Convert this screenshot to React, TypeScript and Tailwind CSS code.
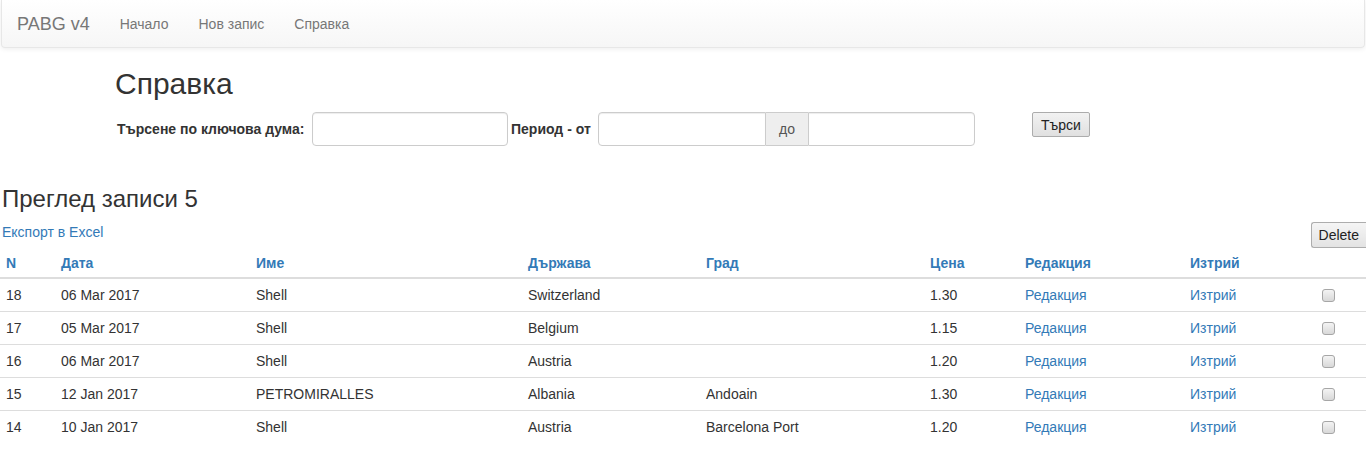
const rows = [
  { n: 18, date: "06 Mar 2017", name: "Shell", country: "Switzerland", city: "", price: "1.30" },
  { n: 17, date: "05 Mar 2017", name: "Shell", country: "Belgium", city: "", price: "1.15" },
  { n: 16, date: "06 Mar 2017", name: "Shell", country: "Austria", city: "", price: "1.20" },
  { n: 15, date: "12 Jan 2017", name: "PETROMIRALLES", country: "Albania", city: "Andoain", price: "1.30" },
  { n: 14, date: "10 Jan 2017", name: "Shell", country: "Austria", city: "Barcelona Port", price: "1.20" },
];

const headers = ["N", "Дата", "Име", "Държава", "Град", "Цена", "Редакция", "Изтрий", ""];

const inputCls =
  "h-[34px] border border-[#ccc] bg-white px-3 shadow-[inset_0_1px_1px_rgba(0,0,0,0.075)] outline-none";

export default function App() {
  return (
    <div className="min-h-screen bg-white text-[14px] leading-[20px] text-[#333] font-['Liberation_Sans',Arial,sans-serif]">
      <nav className="mx-[1px] flex h-[48px] items-center rounded-b-[4px] border border-t-0 border-[#e7e7e7] bg-gradient-to-b from-white to-[#f6f6f6] shadow-[0_1px_5px_rgba(0,0,0,0.075)]">
        <a className="px-[15px] text-[18px] text-[#777]">PABG v4</a>
        <ul className="flex">
          <li className="px-[15px] text-[#777]">Начало</li>
          <li className="px-[15px] text-[#777]">Нов запис</li>
          <li className="px-[15px] text-[#777]">Справка</li>
        </ul>
      </nav>

      <div className="ml-[115px] mt-[19px]">
        <h2 className="h-[33px] text-[30px] leading-[33px] font-normal">Справка</h2>
        <form className="mt-[12px] flex items-center pl-[2px]">
          <label className="w-[195px] font-bold">Търсене по ключова дума:</label>
          <input className={inputCls + " w-[196px] rounded-[4px]"} />
          <label className="ml-[3px] w-[87px] font-bold">Период - от</label>
          <div className="flex">
            <input className={inputCls + " w-[168px] rounded-l-[4px]"} />
            <span className="flex h-[34px] w-[42px] items-center justify-center border-y border-[#ccc] bg-[#eee] text-[#555]">
              до
            </span>
            <input className={inputCls + " w-[167px] rounded-r-[4px]"} />
          </div>
          <button
            type="button"
            className="ml-[57px] h-[25px] self-start rounded-[2px] border border-[#acacac] bg-gradient-to-b from-[#f2f2f2] to-[#e0e0e0] px-[8px] text-[14px] text-[#222]"
          >
            Търси
          </button>
        </form>
      </div>

      <h3 className="mt-[40px] h-[26px] pl-[2px] text-[24px] leading-[26px] font-normal">Преглед записи 5</h3>

      <div className="mt-[10px] flex h-[23px] items-start justify-between pl-[2px]">
        <a className="text-[#337ab7]">Експорт в Excel</a>
        <button
          type="button"
          className="h-[26px] rounded-l-[3px] border border-r-0 border-[#adadad] bg-gradient-to-b from-[#f5f5f5] to-[#e3e3e3] px-[7px] text-[14px] text-[#222]"
        >
          Delete
        </button>
      </div>

      <table className="w-full table-fixed border-collapse">
        <colgroup>
          <col className="w-[55px]" />
          <col className="w-[195px]" />
          <col className="w-[272px]" />
          <col className="w-[178px]" />
          <col className="w-[224px]" />
          <col className="w-[95px]" />
          <col className="w-[165px]" />
          <col className="w-[128px]" />
          <col />
        </colgroup>
        <thead>
          <tr className="border-b-2 border-[#ddd]">
            {headers.map((h, i) => (
              <th key={i} className="px-[6px] pt-[8px] pb-[4px] text-left font-bold text-[#337ab7]">
                {h}
              </th>
            ))}
          </tr>
        </thead>
        <tbody>
          {rows.map((r) => (
            <tr key={r.n} className="border-t border-[#ddd] first:border-t-0">
              <td className="p-[6px]">{r.n}</td>
              <td className="p-[6px]">{r.date}</td>
              <td className="p-[6px]">{r.name}</td>
              <td className="p-[6px]">{r.country}</td>
              <td className="p-[6px]">{r.city}</td>
              <td className="p-[6px]">{r.price}</td>
              <td className="p-[6px] text-[#337ab7]">Редакция</td>
              <td className="p-[6px] text-[#337ab7]">Изтрий</td>
              <td className="p-[6px]">
                <input
                  type="checkbox"
                  className="ml-[4px] block h-[13px] w-[13px] appearance-none rounded-[3px] border border-[#a6a6a6] bg-gradient-to-b from-[#f4f4f4] to-[#d8d8d8]"
                />
              </td>
            </tr>
          ))}
        </tbody>
      </table>
    </div>
  );
}
